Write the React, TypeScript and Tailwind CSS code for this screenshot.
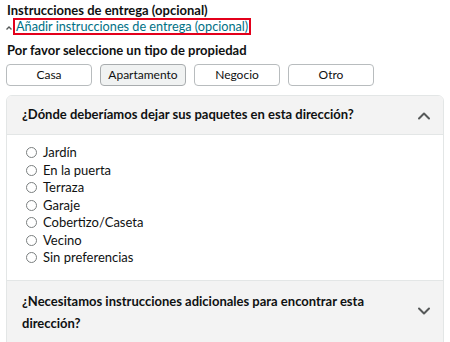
import React from 'react';

const propertyTypes = ['Casa', 'Apartamento', 'Negocio', 'Otro'];
const dropOptions = ['Jardín', 'En la puerta', 'Terraza', 'Garaje', 'Cobertizo/Caseta', 'Vecino', 'Sin preferencias'];

const Chevron = ({ up }: { up?: boolean }) => (
  <svg width="14" height="9" viewBox="0 0 14 9" className="shrink-0">
    <path
      d={up ? 'M2 7.5 L7 2.5 L12 7.5' : 'M2 1.5 L7 6.5 L12 1.5'}
      fill="none"
      stroke="#565959"
      strokeWidth="2"
      strokeLinecap="round"
      strokeLinejoin="round"
    />
  </svg>
);

export default function App() {
  return (
    <div className="w-[450px] h-[342px] overflow-hidden bg-white font-['Lato',sans-serif] text-[#0f1111]">
      <div className="px-[7px] pt-[2px]">
        <h3 className="text-[13px] font-bold leading-[16px]">Instrucciones de entrega (opcional)</h3>
        <div className="-ml-[2px] flex items-center">
          <svg width="8" height="8" viewBox="0 0 8 8" className="mt-[2px] shrink-0">
            <path d="M1.5 5.5 L4 3 L6.5 5.5" fill="none" stroke="#565959" strokeWidth="1.4" />
          </svg>
          <span className="border-2 border-[#e3001b] px-[1px] text-[12.7px] leading-[13px] text-[#007185]">
            Añadir instrucciones de entrega (opcional)
          </span>
        </div>
        <h4 className="mt-[7px] text-[13px] font-bold leading-[16px]">Por favor seleccione un tipo de propiedad</h4>
        <div className="-ml-[1px] mt-[6px] flex gap-[8px]">
          {propertyTypes.map((t) => (
            <button
              key={t}
              className={`h-[22px] w-[86px] rounded-[4px] border text-[12px] leading-[20px] ${
                t === 'Apartamento' ? 'border-[#a8acae] bg-[#f0f2f2]' : 'border-[#b8bcbe] bg-white'
              }`}
            >
              {t}
            </button>
          ))}
        </div>
      </div>

      <div className="ml-[6px] mt-[9px] w-[438px] overflow-hidden rounded-t-[6px] border border-[#e3e6e6]">
        <div className="flex h-[39px] items-center justify-between border-b border-[#e3e6e6] bg-[#f3f3f3] pl-[15px] pr-[12px]">
          <span className="text-[13px] font-bold">¿Dónde deberíamos dejar sus paquetes en esta dirección?</span>
          <Chevron up />
        </div>
        <div className="flex flex-col pb-[13px] pl-[19px] pt-[9px]">
          {dropOptions.map((o) => (
            <label key={o} className="flex h-[17.5px] items-center gap-[6px] text-[13px]">
              <span className="h-[11px] w-[11px] rounded-full border border-[#7b7f80] bg-white" />
              {o}
            </label>
          ))}
        </div>
        <div className="flex items-center justify-between border-t border-[#e3e6e6] bg-[#f3f3f3] pb-[10px] pl-[15px] pr-[12px] pt-[9px]">
          <span className="w-[380px] text-[13px] font-bold leading-[22px]">
            ¿Necesitamos instrucciones adicionales para encontrar esta dirección?
          </span>
          <Chevron />
        </div>
      </div>
    </div>
  );
}
